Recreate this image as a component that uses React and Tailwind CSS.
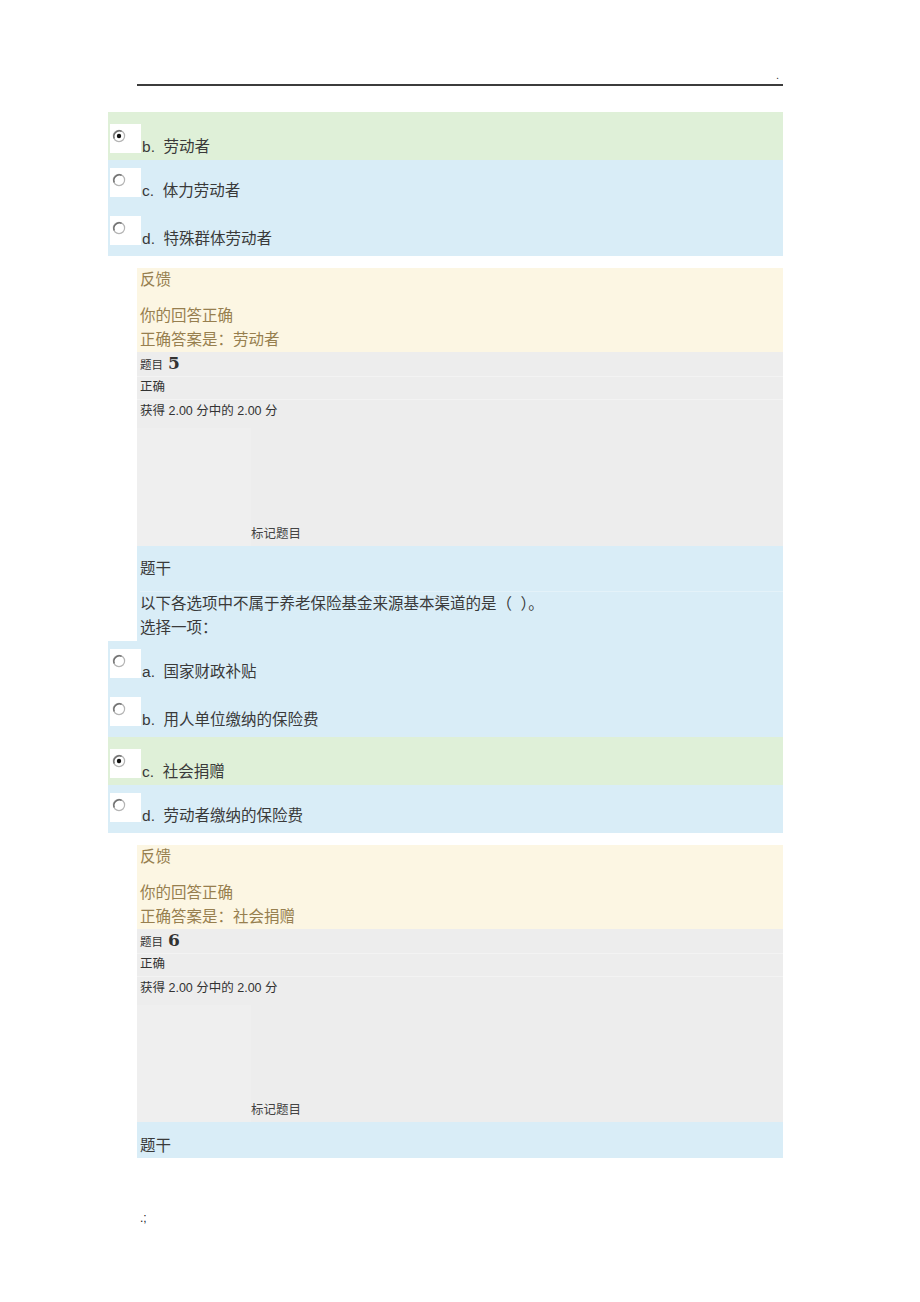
const sans = "font-['Liberation_Sans','Noto_Sans_CJK_SC',sans-serif]"

function Radio({ checked }) {
  return (
    <svg width="14" height="14" viewBox="0 0 14 14" className="ml-[2px] mt-[5px] block">
      <circle cx="7" cy="7" r="5.6" fill="#fff" stroke="#b4b4b4" strokeWidth="1.2" />
      <path d="M2.3 9.6 A5.6 5.6 0 0 1 9.6 2.3" fill="none" stroke="#6e6e6e" strokeWidth="1.4" />
      {checked && <circle cx="7" cy="7" r="2.2" fill="#111" />}
    </svg>
  )
}

function Option({ letter, text, checked }) {
  return (
    <div
      className={
        'flex h-[48px] items-start ' +
        (checked ? 'bg-[#dff0d8] pt-[12px]' : 'bg-[#d9edf7] pt-[8px]')
      }
    >
      <div className="flex items-end">
        <div className="ml-[2px] h-[29px] w-[31px] bg-white">
          <Radio checked={checked} />
        </div>
        <span className="mb-[-4px] pl-px text-[15.5px] leading-[20px] text-[#3a3a3a]">
          {letter}.&nbsp; {text}
        </span>
      </div>
    </div>
  )
}

function Feedback({ answer }) {
  return (
    <div className="ml-[29px] h-[84px] bg-[#fcf6e3] pl-[3px] text-[15.5px] leading-[24px] text-[#977f4f]">
      <p className="mb-[12px]">反馈</p>
      <p>你的回答正确</p>
      <p>正确答案是：{answer}</p>
    </div>
  )
}

function Info({ num, tail }) {
  return (
    <div className="ml-[29px] bg-[#ededed] text-[12.5px] text-[#333]">
      <div className="flex h-[25px] items-end border-b border-[#f3f3f3] pb-[2px] pl-[3px]">
        <span className="text-[11.5px] leading-[18px]">题目</span>
        <span className="mb-[2px] ml-[5px] font-['DejaVu_Serif',serif] text-[17px] font-bold leading-none">{num}</span>
      </div>
      <div className="flex h-[23px] items-center border-b border-[#f3f3f3] pl-[3px]">正确</div>
      <div className="flex h-[23px] items-center pl-[3px]">获得 2.00 分中的 2.00 分</div>
      <div className="mt-[5px] flex items-end" style={{ height: tail }}>
        <div className="h-full w-[114px] bg-[#efefef]" />
        <span className="pb-[2px] leading-[20px] text-[#444]">标记题目</span>
      </div>
    </div>
  )
}

export default function App() {
  return (
    <div className={'min-h-[1302px] w-[920px] bg-white ' + sans}>
      <div className="ml-[137px] w-[646px] pt-[68px]">
        <div className="flex h-[16px] justify-end pr-[4px] text-[11px] leading-[14px] text-[#333]">.</div>
        <div className="h-[1.5px] bg-[#3c3c3c]" />
      </div>

      <div className="ml-[108px] mt-[26px] w-[675px]">
        <div>
          <Option letter="b" text="劳动者" checked />
          <Option letter="c" text="体力劳动者" />
          <Option letter="d" text="特殊群体劳动者" />
        </div>

        <div className="mt-[12px]">
          <Feedback answer="劳动者" />
          <Info num="5" tail="118px" />
        </div>

        <div className="ml-[29px] bg-[#d9edf7] pb-px pl-[3px] pt-[11px] text-[15.5px] leading-[24px] text-[#3a3a3a]">
          <p className="border-b border-[#e4f2f9] pb-[10px]">题干</p>
          <p>以下各选项中不属于养老保险基金来源基本渠道的是（&nbsp;&nbsp;）。</p>
          <p>选择一项：</p>
        </div>

        <div>
          <Option letter="a" text="国家财政补贴" />
          <Option letter="b" text="用人单位缴纳的保险费" />
          <Option letter="c" text="社会捐赠" checked />
          <Option letter="d" text="劳动者缴纳的保险费" />
        </div>

        <div className="mt-[12px]">
          <Feedback answer="社会捐赠" />
          <Info num="6" tail="117px" />
        </div>

        <div className="ml-[29px] h-[36px] bg-[#d9edf7] pl-[3px] pt-[12px] text-[15.5px] leading-[24px] text-[#3a3a3a]">
          题干
        </div>
      </div>

      <div className="ml-[140px] mt-[50px] text-[12px] leading-[20px] text-[#222]">.;</div>
    </div>
  )
}
